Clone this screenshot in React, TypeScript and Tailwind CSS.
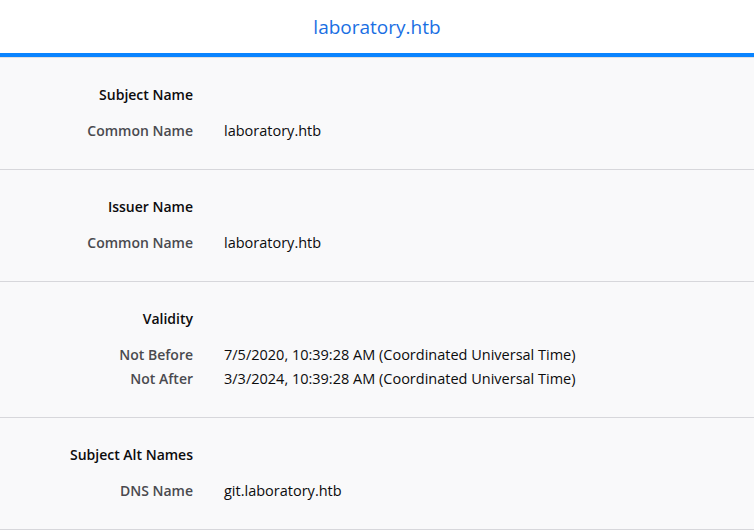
import React from "react";

type Row = { label: string; value: string };
type Section = { title: string; rows: Row[] };

const sections: Section[] = [
  { title: "Subject Name", rows: [{ label: "Common Name", value: "laboratory.htb" }] },
  { title: "Issuer Name", rows: [{ label: "Common Name", value: "laboratory.htb" }] },
  {
    title: "Validity",
    rows: [
      { label: "Not Before", value: "7/5/2020, 10:39:28 AM (Coordinated Universal Time)" },
      { label: "Not After", value: "3/3/2024, 10:39:28 AM (Coordinated Universal Time)" },
    ],
  },
  { title: "Subject Alt Names", rows: [{ label: "DNS Name", value: "git.laboratory.htb" }] },
];

export default function App() {
  return (
    <div
      className="min-h-screen bg-[#f9f9fa] text-[#0c0c0d]"
      style={{ fontFamily: '"Open Sans", "Noto Sans", sans-serif' }}
    >
      {/* Tab header */}
      <div className="bg-white">
        <div className="h-[53px] pt-px flex items-center justify-center text-[19px] text-[#1a6fe3]">
          laboratory.htb
        </div>
        <div className="h-1 bg-[#0a84ff]" />
        <div className="h-px bg-[#e0e0e2]" />
      </div>

      {sections.map((s) => (
        <div key={s.title} className="pt-[25px] pb-[26px] border-b border-[#d7d7db]">
          <div className="flex leading-6 text-[14px]">
            <div className="w-[193px] text-right font-semibold">{s.title}</div>
          </div>
          <div className="mt-3">
            {s.rows.map((r) => (
              <div key={r.label} className="flex gap-[31px] leading-6">
                <div className="w-[193px] shrink-0 text-right font-semibold text-[14px] text-[#4a4a4f]">
                  {r.label}
                </div>
                <div className="text-[14.5px]">{r.value}</div>
              </div>
            ))}
          </div>
        </div>
      ))}
    </div>
  );
}
